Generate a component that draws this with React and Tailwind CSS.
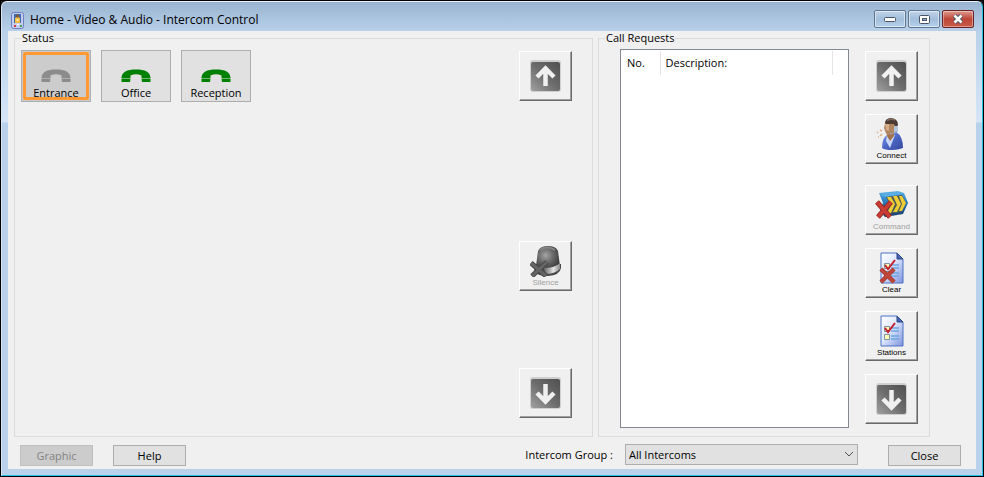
import clsx from "clsx";

const stations = [
  { name: "Entrance", selected: true },
  { name: "Office", selected: false },
  { name: "Reception", selected: false },
];

const AppIcon = () => (
  <svg width="13" height="17" viewBox="0 0 13 17">
    <rect x="0.5" y="0.5" width="12" height="16" rx="2" fill="#c3cdf0" stroke="#6f7fc0" />
    <rect x="3" y="2" width="7" height="9" fill="#3f6cae" />
    <path d="M4 11V6q2.500-2 5 0v5z" fill="#f2b93c" />
    <circle cx="6.5" cy="4" r="1.500" fill="#8a5a2c" />
    <path d="M5.500 7h2v2h-2z" fill="#fff2b0" />
    <rect x="3" y="13" width="2" height="2" fill="#d8343c" />
    <rect x="6" y="12" width="2" height="1" fill="#fff" />
    <rect x="9" y="13" width="2" height="2" fill="#41a548" />
  </svg>
);

const PhoneIcon = ({ className }) => (
  <svg width="30" height="14" viewBox="0 0 30 14" className={className} fill="currentColor">
    <path d="M0.500 9C0.500 3 6 0.500 15 0.500S29.500 3 29.500 9H20.500V6.500Q15 4 9.500 6.500V9z" />
    <path d="M0.500 9.500H9.500L9 13H0.500zM20.500 9.500H29.500V13H21z" />
  </svg>
);

const ArrowIcon = ({ down }) => (
  <svg width="32" height="32" viewBox="0 0 32 32">
    <defs>
      <linearGradient id="arrowBg" x1="0" y1="1" x2="1" y2="0">
        <stop offset="0" stopColor="#a0a0a0" />
        <stop offset="0.5" stopColor="#6c6c6c" />
        <stop offset="1" stopColor="#505050" />
      </linearGradient>
    </defs>
    <rect width="31" height="32" rx="3" fill="#cfcfcf" />
    <rect x="1" y="2" width="29" height="29" rx="2" fill="url(#arrowBg)" />
    <path
      d="M15.500 26V8M7 17L15.500 8.500L24 17"
      transform={down ? "rotate(180 15.500 16.500)" : undefined}
      fill="none"
      stroke="#f0f0f0"
      strokeWidth="4.500"
    />
  </svg>
);

const ConnectIcon = () => (
  <svg width="32" height="32" viewBox="0 0 32 32">
    <defs>
      <linearGradient id="shirt" x1="0" y1="0" x2="1" y2="1">
        <stop offset="0" stopColor="#7f9cec" />
        <stop offset="0.5" stopColor="#4b66c4" />
        <stop offset="1" stopColor="#34489c" />
      </linearGradient>
    </defs>
    <path d="M6 30Q6 20 11 17L20 14Q27 18 27 30Q22 32 16 32Q9 32 6 30z" fill="url(#shirt)" />
    <path d="M11 17L10 23L14 30L19 17z" fill="#c9d8fa" />
    <path d="M12 13L18 12L18 18L14 23L11 18z" fill="#a2704c" />
    <path d="M9 5L17 3L20 7V12L16 17H11L9 13L8 10z" fill="#b08560" />
    <path d="M9 6L13 5V13L10 12z" fill="#d3ad88" />
    <path d="M9 5Q9 1 14 0Q22 0 22 7L20 10L18 6L10 6z" fill="#4a3a33" />
    <path d="M11 2.500Q15 0.500 19 2" fill="none" stroke="#80695d" strokeWidth="1.500" />
    <rect x="18" y="8" width="4" height="6" rx="1" fill="#b4c6dc" />
    <path d="M21 13Q19 17 14 15" fill="none" stroke="#8fa2bd" />
    <path d="M6 13L4 12M6 16L4 18M2 15L1 14M3 19L2 19" stroke="#dcae80" strokeWidth="1.500" />
  </svg>
);

const CommandIcon = () => (
  <svg width="34" height="32" viewBox="0 0 34 32">
    <defs>
      <linearGradient id="command" x1="0" y1="0" x2="0" y2="1">
        <stop offset="0" stopColor="#5fb2e6" />
        <stop offset="0.4" stopColor="#2b7dbe" />
        <stop offset="1" stopColor="#173b6b" />
      </linearGradient>
    </defs>
    <path d="M4 4L23 2L29 4L33 14L28 25L10 28L5 22L8 14z" fill="url(#command)" />
    <path d="M5 5L23 3L27 5L10 8z" fill="#58aee6" />
    <path d="M11 8L27 6L31 14L26 23L13 25L16 17z" fill="#4a5a55" />
    <path
      d="M12 8H16L20 15L16 24H12L16 16zM18 7H22L26 15L22 23H18L22 16zM24 7H27L31 14L27 22H24L27 15z"
      fill="#efcb35"
    />
    <path d="M2 13L15 28M16 13L3 28" stroke="#8c2620" strokeWidth="5" />
    <path d="M2 13L15 28M16 13L3 28" stroke="#c93c34" strokeWidth="3.500" />
  </svg>
);

const ListIcon = ({ crossed }) => (
  <svg width="26" height="32" viewBox="0 0 26 32">
    <defs>
      <linearGradient id="sheet" x1="0" y1="0" x2="1" y2="1">
        <stop offset="0" stopColor="#fff" />
        <stop offset="0.45" stopColor="#dfe8ff" />
        <stop offset="1" stopColor="#7d92dd" />
      </linearGradient>
    </defs>
    <path d="M2 1H18L24 7V31H2z" fill="url(#sheet)" stroke="#4a72c4" />
    <path d="M18 1V7H24z" fill="#4967b5" stroke="#294785" />
    <path d="M12 13H20M12 16H20M12 21H20M12 24H20" stroke="#6ca8df" strokeWidth="1.500" />
    <path d="M5.500 11.500H10.500V16.500H5.500zM5.500 19.500H10.500V24.500H5.500z" fill="#fffbb5" stroke="#7d91a4" />
    <path d="M6 13L9 17L16 8" fill="none" stroke="#c51f29" strokeWidth="2" />
    {crossed && (
      <>
        <path d="M2 17L15 30M15 17L2 30" stroke="#9c3c30" strokeWidth="4.500" />
        <path d="M2 17L15 30M15 17L2 30" stroke="#c0453a" strokeWidth="3" />
      </>
    )}
  </svg>
);

const SilenceIcon = () => (
  <svg width="32" height="32" viewBox="0 0 32 32">
    <defs>
      <radialGradient id="dome" cx="0.4" cy="0.4" r="0.650">
        <stop offset="0" stopColor="#a4a4a4" />
        <stop offset="0.5" stopColor="#686868" />
        <stop offset="1" stopColor="#393939" />
      </radialGradient>
      <linearGradient id="band">
        <stop offset="0" stopColor="#666" />
        <stop offset="0.6" stopColor="#e4e4e4" />
        <stop offset="1" stopColor="#888" />
      </linearGradient>
    </defs>
    <path d="M4 23Q4 31 18 31Q30 30 31 23V19H5z" fill="#484848" />
    <path d="M6 21L8 6Q10 1 18 1Q26 1 28 6L30 21Q18 28 6 21z" fill="url(#dome)" />
    <path d="M10 5Q17 0 25 5" fill="none" stroke="#858585" strokeWidth="2" />
    <path d="M14 23Q25 23 30 18V24Q25 29 15 29z" fill="url(#band)" />
    <path d="M1 18L16 31M17 17L2 31" stroke="#484848" strokeWidth="5" />
    <path d="M1 18L16 31M17 17L2 31" stroke="#656565" strokeWidth="3" />
  </svg>
);

const ToolButton = ({ label, disabled, className, children, ...rest }) => (
  <button
    type="button"
    disabled={disabled}
    className={clsx(
      "flex h-[50px] w-[53px] shrink-0 flex-col items-center border border-t-white border-l-white border-r-[#696969] border-b-[#696969] bg-[#f0f0f0] shadow-[inset_-1px_-1px_0_#a0a0a0]",
      label ? "pt-[3px]" : "justify-center",
      className
    )}
    {...rest}
  >
    {children}
    {label && (
      <span
        className={clsx(
          "font-['Liberation_Sans',sans-serif] text-[8px] leading-[12px]",
          disabled ? "text-[#a0a0a0]" : "text-black"
        )}
      >
        {label}
      </span>
    )}
  </button>
);

const TextButton = ({ disabled, className, children }) => (
  <button
    type="button"
    disabled={disabled}
    className={clsx(
      "h-[21px] w-[73px] border text-center leading-[19px]",
      disabled ? "border-[#bfbfbf] bg-[#cccccc] text-[#838383]" : "border-[#adadad] bg-[#e1e1e1]",
      className
    )}
  >
    {children}
  </button>
);

const StationButton = ({ name, selected }) => (
  <button
    type="button"
    aria-pressed={selected}
    className={clsx(
      "relative flex h-[52px] w-[70px] flex-col items-center border border-[#adadad] pt-[18px]",
      selected ? "bg-[#cccccc]" : "bg-[#e1e1e1]"
    )}
  >
    {selected && <span className="absolute inset-px rounded-xs border-3 border-[#ff9933]" />}
    <PhoneIcon className={selected ? "text-[#8c8c8c]" : "text-[#008000]"} />
    <span className="relative mt-[3px] leading-[14px]">{name}</span>
  </button>
);

const captionButton =
  "flex h-[18px] w-8 items-center justify-center rounded-xs border border-[#5f7590] bg-linear-to-b from-[#c0d4e9] via-[#a3bedb] via-50% to-[#b5d0ea] shadow-[inset_0_0_0_1px_#ffffff80]";

const TitleBar = () => (
  <header className="flex h-[29px] items-start pr-2 pl-[9px]">
    <div className="flex flex-1 items-center gap-[6px] pt-[8px]">
      <AppIcon />
      <h1 className="text-[12px] leading-[20px]">Home - Video &amp; Audio - Intercom Control</h1>
    </div>
    <div className="flex gap-[2px] pt-[8px]">
      <button type="button" aria-label="Minimize" className={captionButton}>
        <svg width="12" height="6" viewBox="0 0 12 6">
          <rect x="0.500" y="1.500" width="11" height="4" rx="1" fill="#fff" stroke="#4b5465" />
        </svg>
      </button>
      <button type="button" aria-label="Maximize" className={captionButton}>
        <svg width="11" height="9" viewBox="0 0 11 9">
          <rect x="0.500" y="0.500" width="10" height="8" rx="1" fill="#fff" stroke="#4b5465" />
          <rect x="3.500" y="3.500" width="4" height="2" fill="#94b0d6" stroke="#4b5465" />
        </svg>
      </button>
      <button
        type="button"
        aria-label="Close window"
        className="flex h-[18px] w-8 items-center justify-center rounded-xs border border-[#6b2328] bg-linear-to-b from-[#dc9c92] via-[#bd4636] via-50% to-[#c95c48] shadow-[inset_0_0_0_1px_#ffffff60]"
      >
        <svg width="12" height="10" viewBox="0 0 12 10">
          <path d="M2.500 1.500L9.500 8.500M9.500 1.500L2.500 8.500" stroke="#51546a" strokeWidth="4.500" />
          <path d="M2.500 1.500L9.500 8.500M9.500 1.500L2.500 8.500" stroke="#fff" strokeWidth="2.500" />
        </svg>
      </button>
    </div>
  </header>
);

export default function App() {
  return (
    <div className="flex min-h-screen flex-col border border-black bg-[#1b1b1b] font-['Open_Sans',sans-serif] text-[11px] text-black">
      <div className="flex flex-1 flex-col rounded-t-md border border-t-[#eaf4fd] border-r-[#22c5e8] border-b-[#22c5e8] border-l-[#d5e6f7] bg-[linear-gradient(#99b4d1,#b9d1ea_30px,#d6e6f7_120px,#b9d1ea_121px)]">
        <TitleBar />
        <main className="mx-[6px] mb-[6px] flex flex-1 flex-col bg-[#f0f0f0] pt-px pb-[3px]">
          <div className="flex flex-1 gap-[5px] pr-[46px] pl-[6px]">
            <fieldset className="flex flex-1 border border-[#dcdcdc] pl-[6px]">
              <legend className="px-px leading-[12px]">Status</legend>
              <div className="flex flex-1 justify-between pt-[6px] pr-5 pb-[18px]">
                <div className="flex items-start gap-[10px]">
                  {stations.map((station) => (
                    <StationButton key={station.name} {...station} />
                  ))}
                </div>
                <div className="flex flex-col justify-between pt-px">
                  <div className="flex flex-col gap-[140px]">
                    <ToolButton aria-label="Scroll stations up">
                      <ArrowIcon />
                    </ToolButton>
                    <ToolButton label="Silence" disabled>
                      <SilenceIcon />
                    </ToolButton>
                  </div>
                  <ToolButton aria-label="Scroll stations down">
                    <ArrowIcon down />
                  </ToolButton>
                </div>
              </div>
            </fieldset>

            <fieldset className="flex w-[332px] border border-[#dcdcdc] pl-[6px]">
              <legend className="px-px leading-[12px]">Call Requests</legend>
              <div className="flex flex-1 gap-4 pt-[5px] pr-[11px] pb-2 pl-[15px]">
                <div className="flex-1 border border-[#828790] bg-white">
                  <table className="mt-px w-[212px] table-fixed text-left leading-[24px]">
                    <thead>
                      <tr>
                        <th className="w-[39px] border-r border-[#e5e5e5] pl-[6px] font-normal">No.</th>
                        <th className="border-r border-[#e5e5e5] pl-[5px] font-normal">Description:</th>
                      </tr>
                    </thead>
                    <tbody />
                  </table>
                </div>
                <div className="flex flex-col gap-[13px] pt-[2px]">
                  <ToolButton aria-label="Scroll requests up">
                    <ArrowIcon />
                  </ToolButton>
                  <ToolButton label="Connect">
                    <ConnectIcon />
                  </ToolButton>
                  <ToolButton label="Command" disabled className="mt-2">
                    <CommandIcon />
                  </ToolButton>
                  <ToolButton label="Clear">
                    <ListIcon crossed />
                  </ToolButton>
                  <ToolButton label="Stations">
                    <ListIcon />
                  </ToolButton>
                  <ToolButton aria-label="Scroll requests down">
                    <ArrowIcon down />
                  </ToolButton>
                </div>
              </div>
            </fieldset>
          </div>

          <footer className="mt-[7px] flex items-end pr-[15px] pl-3">
            <div className="flex flex-1 gap-5">
              <TextButton disabled>Graphic</TextButton>
              <TextButton>Help</TextButton>
            </div>
            <label htmlFor="group" className="mr-3 leading-[22px]">
              Intercom Group :
            </label>
            <div className="relative mr-[30px] h-[22px] w-[233px]">
              <select
                id="group"
                className="block h-[21px] w-full appearance-none border border-[#adadad] bg-[#e1e1e1] pl-[3px] leading-[19px]"
              >
                <option>All Intercoms</option>
              </select>
              <svg
                className="pointer-events-none absolute top-[7px] right-1"
                width="10"
                height="7"
                viewBox="0 0 10 7"
              >
                <path d="M1 1L5 5L9 1" fill="none" stroke="#505050" />
              </svg>
            </div>
            <TextButton>Close</TextButton>
          </footer>
        </main>
      </div>
    </div>
  );
}
